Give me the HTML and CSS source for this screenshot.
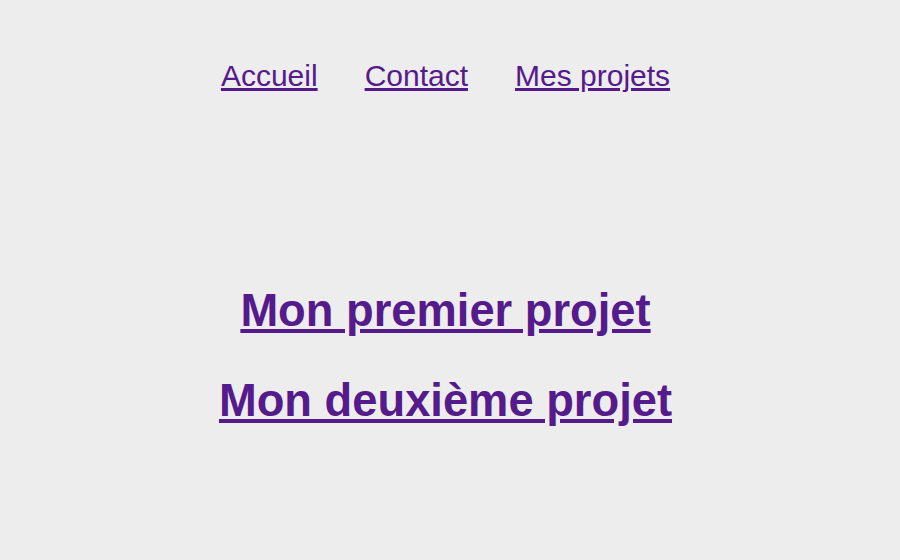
FILE: index.html
```html
<!DOCTYPE html>
<html lang="fr">
<head>
<meta charset="utf-8">
<title>Mes projets</title>
<link rel="stylesheet" href="styles.css">
</head>
<body>
<nav class="nav">
  <a href="#" class="link">Accueil</a>
  <a href="#" class="link">Contact</a>
  <a href="#" class="link">Mes projets</a>
</nav>
<main class="projects">
  <h2 class="project"><a href="#" class="link">Mon premier projet</a></h2>
  <h2 class="project"><a href="#" class="link">Mon deuxième projet</a></h2>
</main>
</body>
</html>
```
FILE: styles.css
```css
html, body {
  margin: 0;
  padding: 0;
  background: #ededed;
  font-family: "Liberation Sans", Arial, sans-serif;
}
body {
  padding-right: 9px;
}
.link {
  color: #551a8b;
  text-decoration: underline;
}
.nav {
  display: flex;
  justify-content: center;
  gap: 47px;
  padding-top: 58px;
  font-size: 30px;
  line-height: 36px;
}
.projects {
  display: flex;
  flex-direction: column;
  align-items: center;
  gap: 38px;
  padding-top: 191px;
}
.project {
  margin: 0;
  font-size: 45.3px;
  font-weight: bold;
  line-height: 52px;
}
```
